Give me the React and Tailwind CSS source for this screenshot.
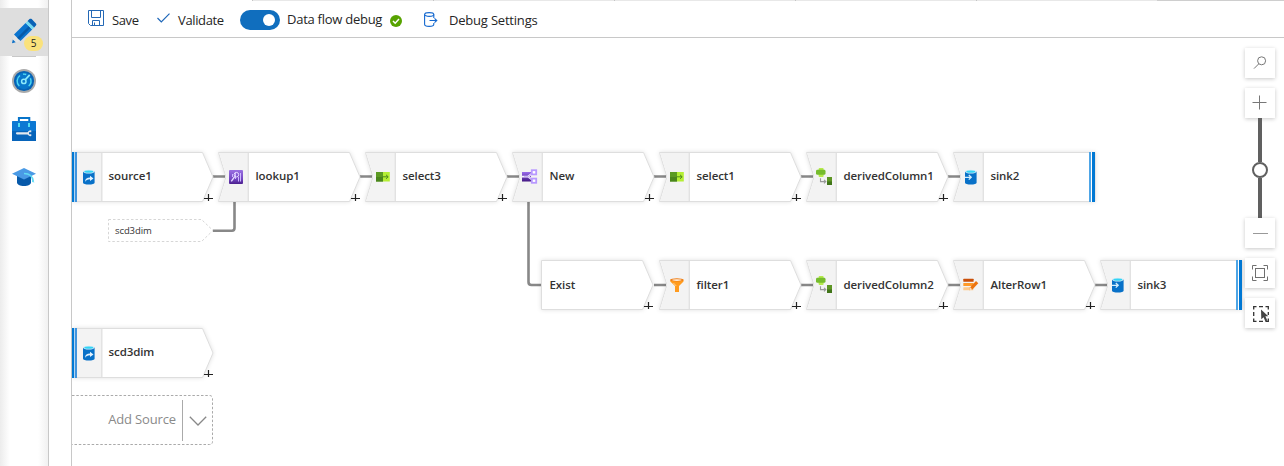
import React from "react";

const FONT = "font-['Open_Sans','Noto_Sans',sans-serif]";

function DatabaseIcon({ sink }) {
  return (
    <svg width="14" height="16" viewBox="0 0 14 16">
      <path d="M1 2.5V13.4C1 14.9 3.6 15.5 6.8 15.5S12.6 14.9 12.6 13.4V2.5Z" fill="#0871c8" />
      <ellipse cx="6.8" cy="2.6" rx="5.8" ry="1.9" fill="#d9edf8" />
      <ellipse cx="6.8" cy="2.7" rx="4.5" ry="1.1" fill="#32d4f5" />
      {sink ? (
        <path d="M1 8.3H6.7M4.8 6L7.2 8.3L4.8 10.6" fill="none" stroke="#d5eefc" strokeWidth="1.3" />
      ) : (
        <path d="M3 13C3.2 9.8 5 8.6 8 8.6V6.7L11.5 9.4L8 12V10.2C5.5 10.2 4 11 3 13Z" fill="#e2f3ff" />
      )}
    </svg>
  );
}

function LookupIcon() {
  return (
    <svg width="14" height="14" viewBox="0 0 14 14">
      <defs>
        <linearGradient id="lk" x1="0" y1="1" x2="0" y2="0">
          <stop offset="0" stopColor="#4b1f8e" />
          <stop offset=".35" stopColor="#7346c2" />
          <stop offset="1" stopColor="#9a70e2" />
        </linearGradient>
      </defs>
      <rect width="14" height="14" rx="1" fill="url(#lk)" />
      <path d="M3.500 4V7M6.500 2.500V9M9.500 7V11.500M11.500 3V11.500" stroke="#cdb8ff" strokeWidth="1" />
      <circle cx="7.4" cy="4.7" r="2.3" fill="none" stroke="#e7dcff" strokeWidth="1" />
      <path d="M5.700 6.500L2.300 11.300" stroke="#e7dcff" strokeWidth="1.3" />
    </svg>
  );
}

function SelectIcon() {
  return (
    <svg width="14" height="10" viewBox="0 0 14 10">
      <rect width="7" height="9.5" fill="#5b9a22" />
      <rect y="5" width="7" height="4.5" fill="#4a851c" />
      <rect x="7" width="6.8" height="9.5" fill="#b4ee34" />
      <path d="M6.5 4.8H12M10 2.8L12.2 4.8L10 6.8" fill="none" stroke="#4f8b1c" strokeWidth="1" />
    </svg>
  );
}

function SplitIcon() {
  return (
    <svg width="16" height="16" viewBox="0 0 16 16">
      <defs>
        <linearGradient id="sp" x1="0" y1="0" x2="0" y2="1">
          <stop offset="0" stopColor="#9a6cec" />
          <stop offset="1" stopColor="#431884" />
        </linearGradient>
      </defs>
      <rect x="0" y="3" width="9" height="9.500" fill="url(#sp)" />
      <path d="M0 7.600H6L12 3.300M6 7.600L12 12" fill="none" stroke="#f4f0ff" strokeWidth="1.900" />
      <path d="M2 7.600H6L11 4M6 7.600L11 11.300" fill="none" stroke="#a98be8" strokeWidth=".6" />
      <rect x="9.8" y="1.2" width="4.4" height="4.2" fill="#fff" stroke="#b899ff" strokeWidth="1.8" />
      <rect x="9.8" y="9.6" width="4.4" height="4.2" fill="#fff" stroke="#b899ff" strokeWidth="1.8" />
    </svg>
  );
}

function DerivedIcon() {
  return (
    <svg width="17" height="18" viewBox="0 0 17 18">
      <rect x="2.6" y="0" width="5" height="9" rx="1" fill="#b4ea4b" />
      <rect x="0" y="1.8" width="9.5" height="5" rx="1.4" fill="#76bc2d" />
      <path d="M4.5 10.2V13.6H9.5M8 11.8L9.8 13.6L8 15.4" fill="none" stroke="#999" strokeWidth="1.1" />
      <rect x="11" y="9" width="5" height="8" fill="#5e9624" />
      <rect x="11" y="13.5" width="5" height="3.5" fill="#417519" />
    </svg>
  );
}

function FilterIcon() {
  return (
    <svg width="14" height="15" viewBox="0 0 14 15">
      <path d="M.3 1.5H13.5V3.5L9 8V14H5V8L.3 3.5Z" fill="#ff9b1f" />
      <ellipse cx="6.9" cy="1.9" rx="6.6" ry="1.7" fill="#ef7d14" />
      <ellipse cx="6.9" cy="2.1" rx="4.8" ry=".8" fill="#fff0df" />
      <path d="M3.4 5L6.3 8" stroke="#ffd08d" strokeWidth="1" />
    </svg>
  );
}

function AlterIcon() {
  return (
    <svg width="16" height="14" viewBox="0 0 16 14">
      <rect x=".3" y=".8" width="10.3" height="3" rx=".5" fill="#c94f09" />
      <rect x=".3" y="5" width="10.3" height="3" rx=".5" fill="#ff9a29" />
      <rect x=".3" y="9.2" width="10" height="3" rx=".5" fill="#ffc98b" />
      <path d="M6.2 12.3L7.2 9.2L13 3.1L15.3 5.3L9.4 11.4Z" fill="#ec7410" />
      <path d="M6.2 12.3L7.2 9.2L9.4 11.4Z" fill="#ffe0b8" />
    </svg>
  );
}

const ICONS = {
  source: <DatabaseIcon />,
  sink: <DatabaseIcon sink />,
  lookup: <LookupIcon />,
  select: <SelectIcon />,
  split: <SplitIcon />,
  derived: <DerivedIcon />,
  filter: <FilterIcon />,
  alter: <AlterIcon />,
};

const OUTLINES = {
  source: "M.5 .5H130.5L141 25L130.5 49.5H.5Z",
  sink: "M.5 .5H142V49.5H.5L8 25Z",
  branch: "M29.5 .5H130.5L141 25L130.5 49.5H29.5Z",
  step: "M.5 .5H131.5L142 25L131.5 49.5H.5L8 25Z",
};

function Node({ x, y, label, kind }) {
  const shape = OUTLINES[kind] ? kind : "step";
  const outline = OUTLINES[shape];
  return (
    <div className="absolute flex h-[50px] w-[143px] items-center" style={{ left: x, top: y }}>
      <svg className="absolute inset-0 overflow-visible" width="143" height="50">
        <path d={outline} fill="#fff" stroke="#dedede" className="drop-shadow-[0_0_2px_rgba(0,0,0,0.12)]" />
        {kind !== "branch" && (
          <path d={shape === "source" ? "M1 1H30V49H1Z" : "M1.3 1H30V49H1.3L8.6 25Z"} fill="#f3f3f3" />
        )}
        {kind !== "branch" && <path d={shape === "source" ? "M29.800 1V49" : "M30.300 1V49"} stroke="#e2e2e2" strokeWidth="1.4" />}
        {shape === "source" && (
          <>
            <rect width="5" height="50" fill="#fff" />
            <rect width="2.3" height="50" fill="#0078d4" />
            <rect x="3" width="2" height="50" fill="#4094de" />
          </>
        )}
        {shape === "sink" && (
          <>
            <rect x="136" width="6" height="50" fill="#fff" />
            <rect x="136" width="2" height="50" fill="#4ea5e6" />
            <rect x="139" width="3" height="50" fill="#0078d4" />
          </>
        )}
        {shape !== "sink" && (
          <path
            d={shape === "step" ? "M133 46.500H142M137.500 42V49" : "M132 46.500H141M136.500 42V49"}
            stroke="#222"
            strokeWidth="1.2"
          />
        )}
      </svg>
      <span className={"relative flex w-[30px] shrink-0 items-center justify-center " + (shape === "source" ? "pl-1" : "pl-1.5")}>{ICONS[kind]}</span>
      <span className={"relative mb-px text-[11.5px] font-semibold leading-4 tracking-[-0.09px] text-[#333] " + (shape === "source" ? "pl-[6.5px]" : "pl-[7.5px]")}>{label}</span>
    </div>
  );
}

const NODES = [
  { x: 0, y: 113.500, label: "source1", kind: "source" },
  { x: 146, y: 113.500, label: "lookup1", kind: "lookup" },
  { x: 293, y: 113.500, label: "select3", kind: "select" },
  { x: 440, y: 113.500, label: "New", kind: "split" },
  { x: 587, y: 113.500, label: "select1", kind: "select" },
  { x: 734, y: 113.500, label: "derivedColumn1", kind: "derived" },
  { x: 881, y: 113.500, label: "sink2", kind: "sink" },
  { x: 440, y: 222, label: "Exist", kind: "branch" },
  { x: 587, y: 222, label: "filter1", kind: "filter" },
  { x: 734, y: 222, label: "derivedColumn2", kind: "derived" },
  { x: 881, y: 222, label: "AlterRow1", kind: "alter" },
  { x: 1028, y: 222, label: "sink3", kind: "sink" },
  { x: 0, y: 289.500, label: "scd3dim", kind: "source" },
];

function Sidebar() {
  return (
    <aside className="flex h-full w-[49px] shrink-0 flex-col items-center border-r border-[#c8c8c8] bg-[linear-gradient(90deg,#ececec,#fff_10px,#fff_38px,#f1f1f1)] pt-2">
      <div className="relative flex h-12 w-full items-center justify-center bg-[#dedede]">
        <svg width="26" height="26" viewBox="0 0 26 26" className="-mt-0.5">
          <path d="M1 25.2L3 16.5L9.5 23Z" fill="#e4e4e4" />
          <path d="M1 25.2L1.8 21.6L4.7 24.3Z" fill="#0b6fc6" />
          <path d="M3 16.5L14.6 4.9L21.2 11.5L9.5 23Z" fill="#0a74cf" />
          <path d="M6.2 19.8L17.7 8.2L19.5 9.9L8 21.5Z" fill="#085aa8" />
          <path d="M14.6 4.9L16.6 2.9L23.2 9.5L21.2 11.5Z" fill="#72dcf4" />
          <path d="M16.6 2.9L18.5 1.1C19.1 .5 20 .5 20.7 1.1L24.9 5.4C25.5 6 25.5 6.9 24.9 7.5L23.2 9.5Z" fill="#0862b6" />
        </svg>
        <span className="absolute left-6 top-[28px] flex h-[15px] w-[19px] items-center justify-center rounded-full bg-[#fae27c] text-[10px] text-[#222]">5</span>
      </div>
      <div className="h-px w-6 bg-[#c8c8c8]" />
      <div className="flex h-12 items-center">
        <svg width="24" height="24" viewBox="0 0 24 24">
          <circle cx="12" cy="12" r="12" fill="#aaa" />
          <circle cx="12" cy="12" r="10.1" fill="#0763b4" />
          <circle cx="12" cy="12" r="8.2" fill="#0876ca" />
          <path d="M7.3 17A6.8 6.8 0 0 1 8 6.5M11 5.2A7 7 0 0 1 14.2 5.5M18.4 9.3A6.8 6.8 0 0 1 16.7 17" fill="none" stroke="#50d7ef" strokeWidth="1.4" />
          <circle cx="11.8" cy="12.4" r="2.2" fill="none" stroke="#8ceafa" strokeWidth="1.5" />
          <path d="M13.1 10.8L17.7 5.9" stroke="#8ceafa" strokeWidth="1.7" />
        </svg>
      </div>
      <div className="flex h-12 items-center">
        <svg width="24" height="24" viewBox="0 0 24 24">
          <path d="M6.9 5V1H17.3V5" fill="none" stroke="#0874c9" strokeWidth="2" />
          <rect y="4" width="24" height="20" rx=".5" fill="#0c78d3" />
          <rect y="14" width="24" height="10" fill="#0764ba" />
          <rect x="6" y="6" width="2" height="4" fill="#50dbf1" />
          <rect x="16" y="6" width="2" height="4" fill="#50dbf1" />
          <path d="M5 16.300H16" stroke="#e3e8ee" strokeWidth="2.200" strokeLinecap="round" />
          <path d="M19.300 13.500A2.900 2.900 0 1 0 19.300 19V17.300H17V15.300H19.300Z" fill="#e3e8ee" />
        </svg>
      </div>
      <div className="flex h-12 items-center">
        <svg width="24" height="20" viewBox="0 0 24 20">
          <path d="M5 8H19V15.5C19 17.4 16 19 12 19S5 17.4 5 15.5Z" fill="#075aaa" />
          <path d="M0 6.8L12 1L24 6.8L12 12.6Z" fill="#4a9ae5" />
          <path d="M12 6.5C16 6.5 20.4 7.3 21.3 14.5" fill="none" stroke="#60dbf4" strokeWidth="1.6" />
          <path d="M20.5 12.5L22.5 15.6L20 15Z" fill="#60dbf4" />
        </svg>
      </div>
    </aside>
  );
}

function TabStrip() {
  return (
    <div className="flex h-px shrink-0 pl-[180px]">
      {[0, 1, 2, 3, 4].map((i) => (
        <span key={i} className="h-px w-[181px] shrink-0 border-l border-[#c4c4c4] bg-[#e8e8e8]" />
      ))}
      <span className="h-px flex-1 bg-[#cecece]" />
    </div>
  );
}

function Toolbar() {
  return (
    <header className="flex h-[37px] shrink-0 items-center border-b border-[#c8c8c8] pb-[3px] pl-4 text-[13px] text-[#252525]">
      <svg width="16" height="16" viewBox="0 0 16 16" fill="none" stroke="#2468b5">
        <path d="M.5 .5H15.5V15.5H2.5L.5 13.5ZM3.5 .5V7.5H12.5V.5M4.5 15.5V10.5H11.5V15.5M6.5 12.5V15.5" />
      </svg>
      <span className="ml-2 mt-1.5 w-7 whitespace-nowrap tracking-[-0.4px]">Save</span>
      <svg className="ml-[17px]" width="13" height="10" viewBox="0 0 13 10" fill="none" stroke="#1d66b8" strokeWidth="1.2">
        <path d="M.5 5L4.3 8.8L12.5 .6" />
      </svg>
      <span className="ml-2 mt-1.5 w-[46px] whitespace-nowrap tracking-[-0.37px]">Validate</span>
      <span className="ml-4 mt-1 flex h-5 w-10 items-center justify-end rounded-full bg-[#106ebe] pr-[5px]">
        <span className="h-3 w-3 rounded-full bg-white" />
      </span>
      <span className="ml-[7px] mt-1 w-[95px] whitespace-nowrap tracking-[-0.26px]">Data flow debug</span>
      <svg className="ml-2 mt-1.5" width="12" height="12" viewBox="0 0 12 12">
        <circle cx="6" cy="6" r="6" fill="#57a300" />
        <path d="M3 6L5.2 8.2L9 4.1" fill="none" stroke="#fff" strokeWidth="1.5" />
      </svg>
      <svg className="ml-[22px] mt-1" width="14" height="15" viewBox="0 0 14 15" fill="none" stroke="#1468cf" strokeWidth="1.1">
        <ellipse cx="5.2" cy="2.5" rx="4.6" ry="1.9" />
        <path d="M.6 2.5V12.3C.6 13.5 2.6 14.4 5.2 14.4C7.7 14.4 9.8 13.5 9.8 12.3V11M9.8 2.5V6M5.5 8.5H12.5M10.5 6.3L12.8 8.5L10.5 10.7" />
      </svg>
      <span className="ml-[11px] mt-1.5 tracking-[-0.2px]">Debug Settings</span>
    </header>
  );
}

function Tool({ children }) {
  return (
    <button className="flex h-[30px] w-[30px] shrink-0 items-center justify-center bg-white shadow-[0_1px_4px_rgba(0,0,0,0.22)]">
      {children}
    </button>
  );
}

function CanvasTools() {
  return (
    <div className="absolute right-[9px] top-[10px] flex flex-col items-center">
      <Tool>
        <svg width="14" height="14" viewBox="0 0 14 14" fill="none" stroke="#777">
          <circle cx="8.6" cy="4.8" r="4" />
          <path d="M5.8 7.8L1 12.6" />
        </svg>
      </Tool>
      <div className="mt-[10px] flex flex-col items-center">
        <Tool>
          <svg width="15" height="15" className="-mt-0.5 -ml-0.5" stroke="#777"><path d="M.5 7.5H14.5M7.5 .5V14.5" /></svg>
        </Tool>
        <div className="flex h-[100px] w-4 flex-col items-center">
          <div className="h-11 w-1 bg-[#606060]" />
          <div className="h-4 w-4 shrink-0 rounded-full border-2 border-[#606060] bg-white" />
          <div className="w-1 flex-1 bg-[#606060]" />
        </div>
        <Tool>
          <svg width="15" height="15" stroke="#999"><path d="M0 7.5H15" /></svg>
        </Tool>
      </div>
      <div className="mt-[10px]">
        <Tool>
          <svg width="16" height="16" viewBox="0 0 16 16" fill="none" stroke="#707070" className="-mt-px">
            <rect x="3.5" y="3.5" width="9" height="9" />
            <path d="M.5 4.5V.5H4.5M11.5 .5H15.5V4.5M15.5 11.5V15.5H11.5M4.5 15.5H.5V11.5" />
          </svg>
        </Tool>
      </div>
      <div className="mt-[10px]">
        <Tool>
          <svg width="17" height="17" viewBox="0 0 17 17" className="ml-0.5 mt-0.5">
            <path d="M.7 3.5V.7H3.5M6 .7H10M12.5 .7H15.3V3.5M15.3 6V9M.7 6V10M.7 12.5V15.3H3.5M6 15.3H10M12.5 15.3H15.3V12.5" fill="none" stroke="#333" strokeWidth="1.3" />
            <path d="M8 3.5L15.3 10.3H12.4L14.3 14.6L12.4 15.4L10.6 11.2L8.3 13.2Z" fill="#444" />
          </svg>
        </Tool>
      </div>
    </div>
  );
}

export default function App() {
  return (
    <div className={"flex h-[466px] w-full overflow-hidden bg-white " + FONT}>
      <Sidebar />
      <div className="ml-[22px] flex min-w-0 flex-1 flex-col border-l border-[#c8c8c8]">
        <TabStrip />
        <Toolbar />
        <main className="relative flex-1 overflow-hidden">
          <svg className="absolute inset-0" width="1212" height="428" fill="none" stroke="#888" strokeWidth="2.6">
            <path d="M141 138.500H153M288 138.500H300M435 138.500H447M582 138.500H594M729 138.500H741M876 138.500H888M582 247H594M729 247H741M876 247H888M1023 247H1035" />
            <path d="M141 192.7H160Q162.500 192.700 162.500 190V164M456.500 164V244Q456.500 247 459.500 247H470" />
            <path d="M36.500 181.500H129.500L141 192.500L129.500 203.500H36.500Z" stroke="#d6d6d6" strokeWidth="1" strokeDasharray="2.500 2" />
          </svg>
          {NODES.map((n) => (
            <Node key={n.label} {...n} />
          ))}
          <span className="absolute left-[43px] top-[186px] text-[9.5px] leading-[13px] tracking-[-0.1px] text-[#333]">scd3dim</span>
          <div className="absolute left-0 top-[357px] flex h-[50px] w-[141px] items-center">
            <svg className="absolute inset-0" width="141" height="50" fill="none" stroke="#aaa">
              <path d="M0 .5H137.500Q140.500 .5 140.500 3.500V46.500Q140.500 49.500 137.500 49.500H0" strokeDasharray="2.500 1.800" />
            </svg>
            <span className="w-[104px] text-right text-[13px] tracking-[-0.15px] text-[#8a8a8a]">Add Source</span>
            <span className="ml-1.5 h-[41px] w-px bg-[#aaa]" />
            <svg className="ml-1.5 mt-0.5" width="18" height="10" fill="none" stroke="#888" strokeWidth="1.3"><path d="M.8 .8L9 9L17.2 .8" /></svg>
          </div>
          <CanvasTools />
        </main>
      </div>
    </div>
  );
}
